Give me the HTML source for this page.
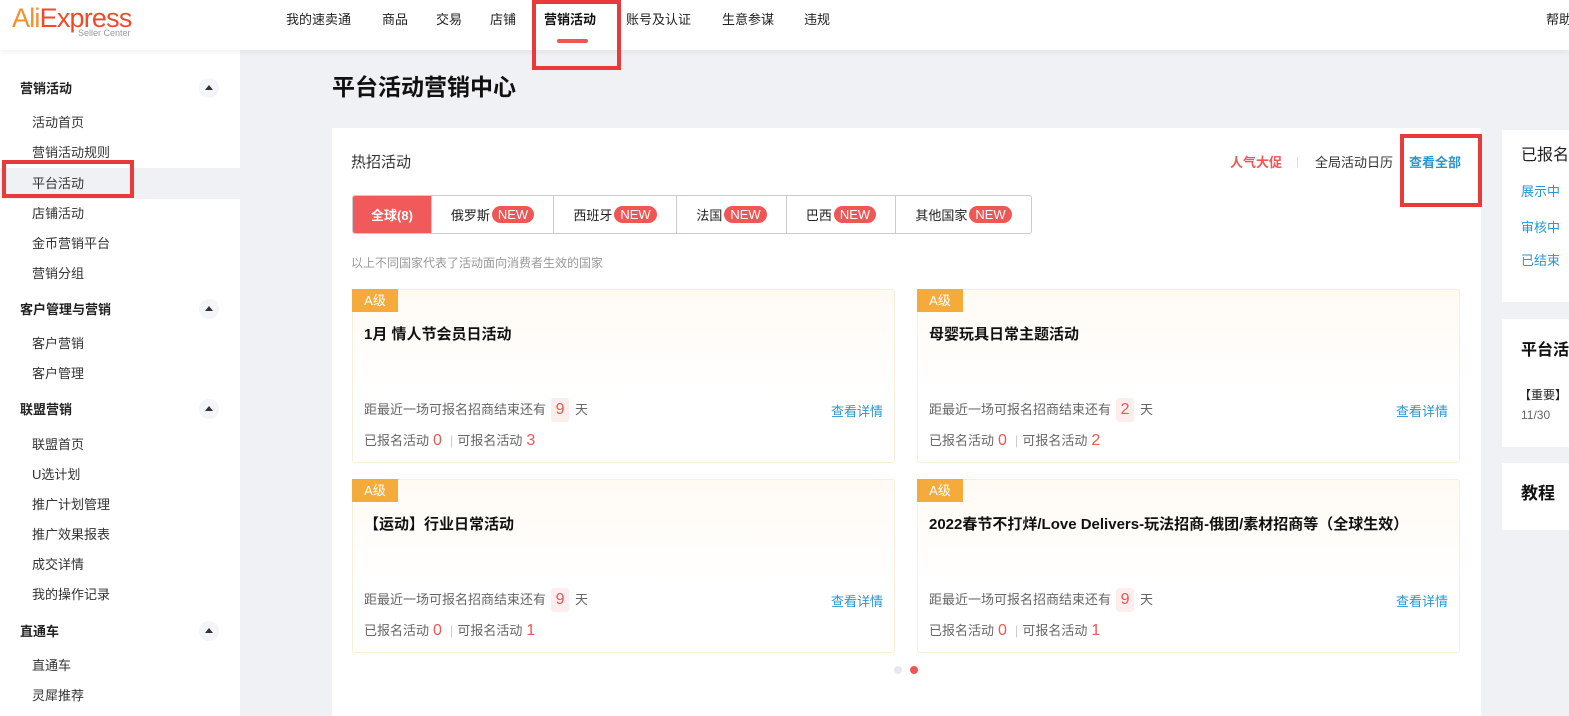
<!DOCTYPE html>
<html><head><meta charset="utf-8"><style>
*{margin:0;padding:0;box-sizing:border-box}
body{width:1569px;height:716px;overflow:hidden;background:#f0f1f4;font-family:"Liberation Sans","Noto Sans CJK SC",sans-serif;color:#222;position:relative}
.a{position:absolute;white-space:nowrap}
.top{position:absolute;left:0;top:0;width:1569px;height:50px;background:#fff;box-shadow:0 2px 6px rgba(0,0,0,.06);z-index:2}
.nav{font-size:13px;line-height:20px;top:10px;color:#222}
.side{position:absolute;left:0;top:50px;width:240px;height:666px;background:#fff}
.sh{font-size:13px;font-weight:bold;left:20px;line-height:20px;color:#222}
.si{font-size:13px;left:32px;line-height:20px;color:#333}
.tg{position:absolute;left:199px;width:20px;height:20px;border-radius:50%;background:#f3f5f9}
.tg:after{content:"";position:absolute;left:6px;top:7px;border-left:4px solid transparent;border-right:4px solid transparent;border-bottom:5px solid #333}
.redbox{position:absolute;border:4px solid #e8393b;z-index:5}
.panel{position:absolute;background:#fff}
.tabs{position:absolute;left:352px;top:195px;width:680px;height:39px;border:1px solid #c9ccd3;border-radius:3px;display:flex;font-size:13px}
.tabs div{border-left:1px solid #c9ccd3;display:flex;align-items:center;justify-content:center;flex:none}
.tabs div:first-child{border-left:none}
.new{background:#ef5656;color:#fff;border-radius:9px;padding:0 6px;line-height:17px;margin-left:2px;font-size:13px}
.card{position:absolute;width:543px;height:174px;border:1px solid #fbefd9;border-radius:3px;background:linear-gradient(#fffaf4,#fff 60%)}
.card .tag{position:absolute;left:-1px;top:-1px;width:46px;height:23px;background:#f5ab3c;color:#fff;font-size:13px;line-height:23px;text-align:center}
.card .t{position:absolute;left:11px;top:34px;font-size:15px;font-weight:bold;line-height:22px;color:#111}
.card .l1{position:absolute;left:11px;top:108px;font-size:13px;color:#666;line-height:24px}
.card .l2{position:absolute;left:11px;top:141px;font-size:13px;color:#666;line-height:20px}
.num{display:inline-block;background:#fdeeee;color:#ef5656;font-size:16px;width:18px;text-align:center;border-radius:3px;margin:0 6px 0 5px;line-height:24px}
.rn{color:#ef5656;font-size:16px;margin:0 4px}
.sep{color:#ccc;margin:0 4px}
.more{position:absolute;right:11px;top:112px;font-size:13px;color:#2b96cf;line-height:20px}
</style></head><body>
<div class="top">
 <div class="a" style="left:12px;top:3px;font-size:27px;line-height:30px;color:#f04a2a;letter-spacing:-0.8px"><span style="color:#f7902a">Ali</span>Express</div>
 <div class="a" style="left:78px;top:28px;font-size:9px;color:#999;line-height:10px">Seller Center</div>
 <div class="a nav" style="left:286px">我的速卖通</div>
 <div class="a nav" style="left:382px">商品</div>
 <div class="a nav" style="left:436px">交易</div>
 <div class="a nav" style="left:490px">店铺</div>
 <div class="a nav" style="left:544px;font-weight:bold;color:#111">营销活动</div>
 <div class="a" style="left:557px;top:39px;width:31px;height:4px;border-radius:2px;background:#ef5656"></div>
 <div class="a nav" style="left:626px">账号及认证</div>
 <div class="a nav" style="left:722px">生意参谋</div>
 <div class="a nav" style="left:804px">违规</div>
 <div class="a nav" style="left:1546px">帮助</div>
</div>
<div class="redbox" style="left:532px;top:0;width:89px;height:70px"></div>
<div class="side">
 <div class="a sh" style="top:29px">营销活动</div><div class="tg" style="top:28px"></div>
 <div class="a si" style="top:63px">活动首页</div>
 <div class="a si" style="top:93px">营销活动规则</div>
 <div class="a" style="left:0;top:118px;width:240px;height:31px;background:#f0f1f4"></div>
 <div class="a si" style="top:124px">平台活动</div>
 <div class="a si" style="top:154px">店铺活动</div>
 <div class="a si" style="top:184px">金币营销平台</div>
 <div class="a si" style="top:214px">营销分组</div>
 <div class="a sh" style="top:250px">客户管理与营销</div><div class="tg" style="top:249px"></div>
 <div class="a si" style="top:284px">客户营销</div>
 <div class="a si" style="top:314px">客户管理</div>
 <div class="a sh" style="top:350px">联盟营销</div><div class="tg" style="top:349px"></div>
 <div class="a si" style="top:385px">联盟首页</div>
 <div class="a si" style="top:415px">U选计划</div>
 <div class="a si" style="top:445px">推广计划管理</div>
 <div class="a si" style="top:475px">推广效果报表</div>
 <div class="a si" style="top:505px">成交详情</div>
 <div class="a si" style="top:535px">我的操作记录</div>
 <div class="a sh" style="top:572px">直通车</div><div class="tg" style="top:571px"></div>
 <div class="a si" style="top:606px">直通车</div>
 <div class="a si" style="top:636px">灵犀推荐</div>
</div>
<div class="redbox" style="left:2px;top:160px;width:132px;height:38px"></div>

<div class="a" style="left:332px;top:71px;font-size:23px;font-weight:bold;line-height:32px;color:#111">平台活动营销中心</div>

<div class="panel" style="left:332px;top:128px;width:1149px;height:588px"></div>
<div class="a" style="left:351px;top:153px;font-size:15px;line-height:20px;color:#333">热招活动</div>
<div class="a" style="left:1230px;top:153px;font-size:13px;line-height:20px;color:#ef5656;font-weight:bold">人气大促</div>
<div class="a" style="left:1297px;top:157px;width:1px;height:11px;background:#ddd"></div>
<div class="a" style="left:1315px;top:153px;font-size:13px;line-height:20px;color:#333">全局活动日历</div>
<div class="a" style="left:1409px;top:153px;font-size:13px;line-height:20px;color:#2b96cf;font-weight:bold">查看全部</div>
<div class="redbox" style="left:1400px;top:134px;width:82px;height:73px"></div>

<div class="tabs">
 <div style="width:78px;background:#f05a5a;color:#fff;font-weight:bold;border-radius:2px 0 0 2px">全球(8)</div>
 <div style="width:122px">俄罗斯<span class="new">NEW</span></div>
 <div style="width:123px">西班牙<span class="new">NEW</span></div>
 <div style="width:110px">法国<span class="new">NEW</span></div>
 <div style="width:109px">巴西<span class="new">NEW</span></div>
 <div style="width:136px">其他国家<span class="new">NEW</span></div>
</div>
<div class="a" style="left:351px;top:254px;font-size:12px;line-height:18px;color:#999">以上不同国家代表了活动面向消费者生效的国家</div>

<div class="card" style="left:352px;top:289px"><div class="tag">A级</div><div class="t">1月 情人节会员日活动</div>
 <div class="l1">距最近一场可报名招商结束还有<span class="num">9</span>天</div>
 <div class="l2">已报名活动<span class="rn">0</span><span class="sep">|</span>可报名活动<span class="rn">3</span></div><div class="more">查看详情</div></div>
<div class="card" style="left:917px;top:289px"><div class="tag">A级</div><div class="t">母婴玩具日常主题活动</div>
 <div class="l1">距最近一场可报名招商结束还有<span class="num">2</span>天</div>
 <div class="l2">已报名活动<span class="rn">0</span><span class="sep">|</span>可报名活动<span class="rn">2</span></div><div class="more">查看详情</div></div>
<div class="card" style="left:352px;top:479px"><div class="tag">A级</div><div class="t">【运动】行业日常活动</div>
 <div class="l1">距最近一场可报名招商结束还有<span class="num">9</span>天</div>
 <div class="l2">已报名活动<span class="rn">0</span><span class="sep">|</span>可报名活动<span class="rn">1</span></div><div class="more">查看详情</div></div>
<div class="card" style="left:917px;top:479px"><div class="tag">A级</div><div class="t">2022春节不打烊/Love Delivers-玩法招商-俄团/素材招商等（全球生效）</div>
 <div class="l1">距最近一场可报名招商结束还有<span class="num">9</span>天</div>
 <div class="l2">已报名活动<span class="rn">0</span><span class="sep">|</span>可报名活动<span class="rn">1</span></div><div class="more">查看详情</div></div>
<div class="a" style="left:894px;top:666px;width:8px;height:8px;border-radius:50%;background:#e8e8e8"></div>
<div class="a" style="left:910px;top:666px;width:8px;height:8px;border-radius:50%;background:#ef5656"></div>

<div class="panel" style="left:1502px;top:130px;width:67px;height:172px"></div>
<div class="a" style="left:1521px;top:145px;font-size:16px;line-height:22px;color:#222">已报名</div>
<div class="a" style="left:1521px;top:182px;font-size:13px;line-height:20px;color:#2b96cf">展示中</div>
<div class="a" style="left:1521px;top:218px;font-size:13px;line-height:20px;color:#2b96cf">审核中</div>
<div class="a" style="left:1521px;top:251px;font-size:13px;line-height:20px;color:#2b96cf">已结束</div>
<div class="panel" style="left:1502px;top:319px;width:67px;height:128px"></div>
<div class="a" style="left:1521px;top:340px;font-size:16px;font-weight:bold;line-height:22px;color:#111">平台活动</div>
<div class="a" style="left:1519px;top:386px;font-size:12px;line-height:18px;color:#222">【重要】</div>
<div class="a" style="left:1521px;top:406px;font-size:12px;line-height:18px;color:#666">11/30</div>
<div class="panel" style="left:1502px;top:463px;width:67px;height:67px"></div>
<div class="a" style="left:1521px;top:483px;font-size:17px;font-weight:bold;line-height:22px;color:#111">教程</div>
</body></html>
